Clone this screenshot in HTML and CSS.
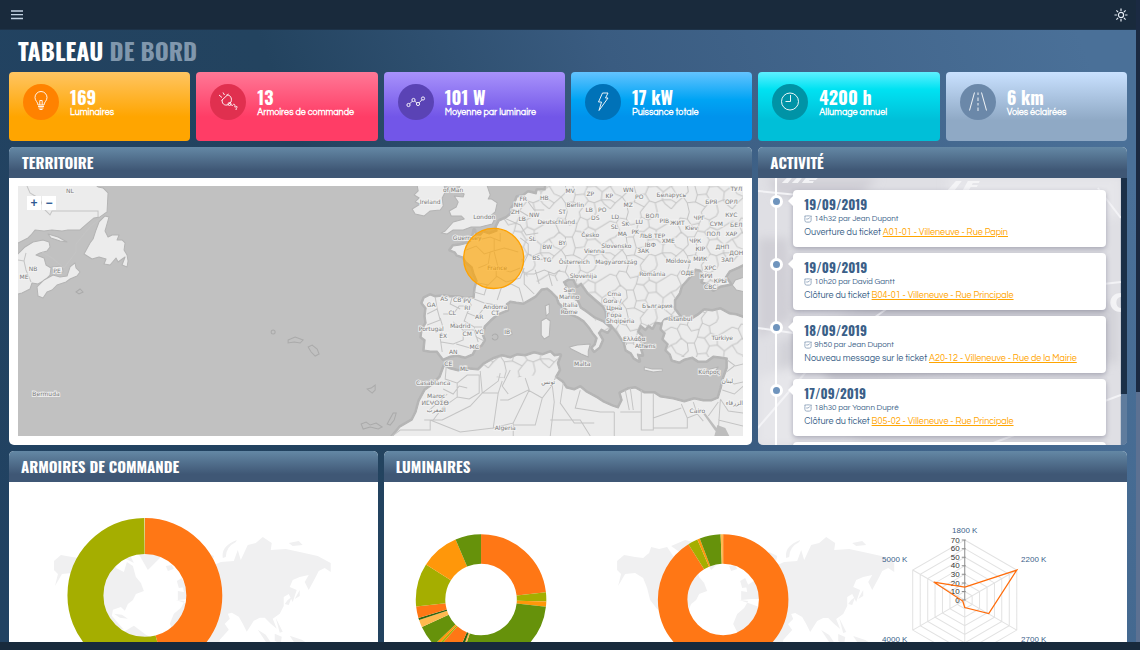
FILE: index.html
```html
<!DOCTYPE html>
<html lang="fr">
<head>
<meta charset="utf-8">
<title>Tableau de bord</title>
<link rel="stylesheet" href="styles.css">
</head>
<body>
<div class="app">
  <div class="view">
    <header class="topbar">
      <button class="icon-btn" type="button" aria-label="Menu"><svg width="12" height="10" viewBox="0 0 12 10"><path d="M0 1h12M0 4.700h12M0 8.500h12" stroke="#c3d2e2" stroke-width="1.300"/></svg></button>
      <button class="icon-btn" type="button" aria-label="Luminosité"><svg width="14" height="14" viewBox="0 0 14 14" fill="none" stroke="#e6edf5" stroke-width="1.200"><circle cx="7" cy="7" r="2.600"/><path d="M7 .5v2.400M7 11.100v2.400M.5 7h2.400M11.100 7h2.400M2.400 2.400l1.700 1.700M9.900 9.900l1.700 1.700M2.400 11.600l1.700-1.700M9.900 4.100l1.700-1.700"/></svg></button>
    </header>
    <main class="main">
      <h1 class="title">TABLEAU <span class="title-soft">DE BORD</span></h1>
      <div class="grid">
        <section class="stat stat-orange">
          <span class="stat-icon"><svg viewBox="0 0 36 36"><path d="M15 21c0-3-3-4-3-7.500a6 6 0 0 1 12 0c0 3.500-3 4.500-3 7.500zM15 22.500h6M15.500 24h5M16.500 25.500h3M16.800 21v-4.500h2.400v4.500"/></svg></span>
          <div><strong class="stat-value">169</strong><span class="stat-label">Luminaires</span></div>
        </section>
        <section class="stat stat-pink">
          <span class="stat-icon"><svg viewBox="0 0 36 36"><path d="M11.500 16.500l7-6.500M12.500 15.500c-1.500 3.500 2 7 6 5l2.500-2.500c1.500-4-1-7.500-4.500-7M12 13.500l-3-2.500M14.500 11l-1.500-2.500M20.500 20.500l2 1c1-2 2.500-1.500 2.500.5-1 2.500 1.500 0 2 .5.500 1-1 1.500-1 3.500"/><circle cx="19.500" cy="20" r="1.500"/></svg></span>
          <div><strong class="stat-value">13</strong><span class="stat-label">Armoires de commande</span></div>
        </section>
        <section class="stat stat-violet">
          <span class="stat-icon"><svg viewBox="0 0 36 36"><circle cx="10.500" cy="21" r="1.600"/><circle cx="15.500" cy="16" r="1.600"/><circle cx="20" cy="20" r="1.600"/><circle cx="25" cy="14.500" r="1.600"/><path d="M11.600 19.900l2.800-2.800M16.700 17.100l2.100 1.800M21.100 18.800l2.900-3.100"/></svg></span>
          <div><strong class="stat-value">101 W</strong><span class="stat-label">Moyenne par luminaire</span></div>
        </section>
        <section class="stat stat-blue">
          <span class="stat-icon"><svg viewBox="0 0 36 36"><path d="M17.500 9h5.500l-2.500 5h2.500l-9 12.500 2.500-8.500h-3z"/></svg></span>
          <div><strong class="stat-value">17 kW</strong><span class="stat-label">Puissance totale</span></div>
        </section>
        <section class="stat stat-cyan">
          <span class="stat-icon"><svg viewBox="0 0 36 36"><circle cx="18" cy="17.500" r="8.500"/><path d="M18.500 11v6.500h-5"/></svg></span>
          <div><strong class="stat-value">4200 h</strong><span class="stat-label">Allumage annuel</span></div>
        </section>
        <section class="stat stat-gray">
          <span class="stat-icon"><svg viewBox="0 0 36 36"><path d="M14.500 8.500L9.500 26.500M21.500 8.500l5 18M18 8.500v2.500M18 13.500v3.500M18 19v2.500M18 23.500v3.500"/></svg></span>
          <div><strong class="stat-value">6 km</strong><span class="stat-label">Voies éclairées</span></div>
        </section>

        <section class="panel wide">
          <h2 class="panel-title">TERRITOIRE</h2>
          <div class="map-wrap">
            <div class="map">
              <svg class="map-svg" viewBox="18 186 725 250" preserveAspectRatio="xMidYMid slice">
                <defs>
                  <path id="europe" d="M547 180L545 190 537 190 536 194 528 192 523 196 517 197 514 205 511 209 512 213 506 218 499 221 496 227 497 231 489 234 483 232 480 236 475 235 474 230 472 240 468 243 460 245 453 246 450 250 455 252 457 255 463 257 466 262 472 267 474 274 477 281 475 288 474 298 465 299 458 297 450 297 443 296 435 297 430 295 424 298 422 303 426 308 425 316 426 323 422 330 421 337 425 340 424 350 430 351 437 351 440 355 443 359 450 356 457 355 465 357 472 354 475 348 481 345 484 340 482 335 484 326 490 320 497 314 507 310 506 304 510 301 516 302 523 303 530 299 535 296 541 289 547 288 552 292 557 297 559 303 566 309 571 314 578 317 584 321 589 327 593 333 597 338 595 345 592 348 594 351 599 347 602 340 598 333 601 329 607 332 610 328 603 322 594 318 586 312 580 308 577 301 570 297 567 289 563 282 568 279 573 278 577 286 581 283 588 293 596 300 603 306 606 311 607 320 612 326 617 332 621 338 624 342 626 350 631 353 634 358 639 361 637 354 642 355 640 349 645 347 639 341 641 336 637 332 640 325 645 329 648 325 652 328 655 322 661 323 664 319 671 316 680 317 674 309 674 300 679 293 681 286 689 277 695 269 700 270 704 276 702 282 709 284 713 290 720 286 730 284 725 277 729 271 738 267 750 261V180z"/>
                  <path id="south" d="M663 320L670 319 680 321 690 320 698 315 704 310 712 311 720 309 729 314 736 315 750 320V445H385L400 427 412 420 416 412 419 401 425 390 432 385 440 377 444 366 450 369 458 371 467 369 478 370 484 364 493 359 502 356 510 358 517 355 525 356 534 353 542 355 550 352 554 356 560 355 557 363 559 370 555 377 562 382 566 388 574 390 580 387 586 392 597 398 603 402 612 406 618 408 622 400 620 393 628 389 635 388 644 393 654 393 660 397 673 399 684 402 694 399 703 401 711 401 718 398 721 388 723 379 727 368 727 358 721 357 713 356 706 361 698 361 692 357 684 359 679 362 672 360 670 354 666 350 668 344 663 339 665 333 661 329z"/>
                  <clipPath id="europe-clip"><use href="#europe"/></clipPath>
                  <clipPath id="south-clip"><use href="#south"/></clipPath>
                  <pattern id="cells" width="61" height="53" patternUnits="userSpaceOnUse">
                    <path d="M0 9l6 2 3-5 7 1 2-7M16 7l4 6 8-2 3-6-1-5M31 5l7 3 7-4 2-4M38 8l1 7 7 3 7-4 8-5M39 15l-6 5-7-1 2-8M26 19l-3 6-7 0-6-5-4-9M10 20l-5 5-5 2M16 25l1 8-5 5-7-3-5-8M33 20l5 8 8-1 0-9M38 28l-3 7-9 1-3-11M26 36l-2 7-8 1-4-6M46 27l7 6 8-6M53 33l-1 8-7 3-6-2-4-7M39 42l-5 6-10-5M34 48l-4 5M12 38l-7 6-5-3M16 44l2 9M52 41l9 0M45 44l2 9M5 44l-5 6M61 50l-6-5-3-4"/>
                  </pattern>
                </defs>
                <rect x="18" y="186" width="725" height="250" fill="#c1c1c1"/>
                <g class="halo">
                  <use href="#europe"/><use href="#south"/>
                </g>
                <g class="land">
                  <path d="M10 180H90L98 187 103 188 108 193 107 212 100 217 94 218 88 223 80 230 68 230 62 231 52 230 44 231 35 230 31 235 28 238 18 243 10 244z"/>
                  <path d="M10 256L18 254 25 247 33 242 43 240 49 242 50 247 47 251 40 253 36 255 44 258 46 265 51 268 50 275 45 280 38 284 32 283 30 289 22 293 10 296z"/>
                  <path d="M37 287L44 280 53 275 60 277 67 276 70 267 75 263 76 268 80 272 77 276 70 279 66 282 57 285 52 290 47 292 43 298 38 296z"/>
                  <path d="M105 216L109 217 107 224 105 231 108 237 112 235 119 235 117 240 122 240 125 243 124 250 127 255 128 261 127 267 122 265 125 257 118 262 116 258 110 265 104 264 106 259 99 257 92 259 84 254 90 243 93 239 96 230 99 222z"/>
                  <path d="M48 234L58 237 67 242 60 241 51 238zM52 267l10-1 1 6-10 1z"/>
                  <path d="M416 180L418 191 414 195 419 198 415 202 420 204 412 209 415 214 424 216 430 211 440 210 443 206 442 198 445 192 443 180z"/>
                  <path d="M462 180L458 191 464 194 463 197 454 196 458 202 456 207 449 211 451 216 461 216 464 219 453 222 445 231 441 233 447 234 453 230 463 230 471 227 480 227 492 224 494 220 489 217 495 212 497 203 491 199 488 199 490 195 485 180z"/>
                  <use href="#europe"/><use href="#south"/>
                  <path d="M750 275L735 280 732 285 736 290 750 293zM569 347l8-2 13-1-2 7 0 6-7-3-10-5zM541 321l5-3 4 3-1 15-5 3-3-4zM545 306l4-2 0 9-3 3zM644 367l8 2 10 0 0 2-9 1-9-2zM704 373l6-4 8-2-4 5-6 4zM505 333l6-2 1 3-4 2z"/>
                </g>
                <g clip-path="url(#europe-clip)"><path d="M498 186H743V345H612L603 330 560 280 545 286 522 274 520 238 497 226z" fill="url(#cells)"/></g>
                <g clip-path="url(#south-clip)"><path d="M663 310H743V357H663z" fill="url(#cells)"/><path d="M480 345h80v30l-15 3-15-3-20 4-15-2-14 0z" fill="url(#cells)"/></g>
                <g class="borders">
                  <path d="M27 186l3 7 10 6 4 10 6 6 2-4h46v6M26 253l-2 8 2 9 5 12M18 260l6 1M42 252l10 6 12 10 12-16 0-8 14-17 12-10"/>
                  <path d="M474 235l8 4 8-2 10 4 0-8M466 250l10-4 8 8 10-3 0-12M478 268l10-4 2-12 14-4 14 4M494 252l4 16 12 4 10-4M478 283l10 2 8-8 0-10M496 276l10 6 14-4 4-10M474 292l10 3 3-10M474 299l10 4 12 2 10 4M497 300l4-12 10-4 8 4 4 14"/>
                  <path d="M435 297l2 12-10 5M437 309l3 11-13 5M440 318l3 10-3 10 2 14M443 314l10 0 6-8 8 0M452 297l-2 7 10 5M467 297l4 8-4 8 10 4 6-8 6-3M467 313l-3 8 10 6 8 0M453 322l10 8 0 10-10 4-12-2M464 330l10 0 4 12M456 344l14 4M474 327l2 10 8 4"/>
                  <path d="M520 238l8 6 0 10 10 6 10-2M528 254l-6 12 2 8 10 0 10-4 10 4 6-4M524 274l0 10 10 10M535 270l4 14M548 272l4 14M528 202l6 8 10 0M518 210l10 6M506 219l14 6 6 10 12-2"/>
                  <path d="M446 367l-1 12 12 4 0 14-14 10-10 13M457 383l10-8 12 0 0 18-10 6-12-2M443 389l10 5 6-8 8 2M480 371l2 22-12 13-28 14-18 0M427 412l20-18M482 393l16-12 2-8M482 393l16 0 4-12M498 393l-5 35 20-5 0 13M500 400h8l20-10 14 8 10-13 4-9M510 370l-8 16 6 8M525 378l4 12-16 33M542 398l-7 27-22 0M552 385l2 17-4 34M563 383l-3 20 14 20 20 0M550 420l30 0 10 16M580 390l-5 18 25 4 14 0M614 412v24M620 412h21v-22M630 388l3 22M625 390l4 20M641 395v35h12v-37M653 428h34v-10l-6-14M653 418l28-10M687 418l10-4 6 7M697 414l-4-12M720 400l-2 30M718 402l-10 14M727 360l8 6 8-2M726 372l8-6M724 380l10 4 9-2M722 390l12 4 9-8M720 399l8 12 15 2M718 420l25 6M392 436l8-6 30 0 0-10M430 420l30 12 33-4"/>
                </g>
                <path d="M704 412l13 17-2 2-12-17zM717 425l8 3 4 8h-15z" fill="#bdbdbd"/>
                <g class="islands"><circle cx="273" cy="332" r="2"/><path d="M288 340l7-3 8 3-3 3-6-1-6 1zM308 347l4-2 5 4 2 5-4 2-4-4zM367 389l4-1 4-3 0 5-3 3zM361 424l5-2 4 3 6-2 6 4-4 2-8-2-7 2zM387 424l6-11 3 0-2 7-4 5zM76 292l4-3 3 3-4 2zM492 336a3 3 0 1 1 0 2"/></g>
                <g class="labels">
                  <text x="70" y="193">NL</text><text x="33" y="271">NB</text><text x="57" y="273">PE</text><text x="24" y="279">ME</text><text x="46" y="396">Bermuda</text>
                  <text x="430" y="204">Ireland</text><text x="453" y="192">of Man</text><text x="484" y="219">London</text><text x="467" y="240">Guernsey</text>
                  <text x="497" y="270">France</text><text x="431" y="307">GA</text><text x="444" y="301">AS</text><text x="457" y="302">CB</text><text x="467" y="303">PV</text><text x="452" y="315">CL</text><text x="467" y="310">RI</text><text x="479" y="319">AR</text><text x="495" y="309">Andorra</text><text x="495" y="315">CT</text><text x="431" y="331">Portugal</text><text x="460" y="328">Madrid</text><text x="443" y="338">EX</text><text x="467" y="336">CM</text><text x="479" y="334">VC</text><text x="474" y="349">MC</text><text x="453" y="354">AN</text><text x="448" y="366">CE</text><text x="464" y="371">ML</text><text x="433" y="385">Casablanca</text><text x="436" y="398">Maroc</text><text x="435" y="405">ⵍⵎⵖⵔⵉⴱ</text><text x="436" y="412">المغرب</text><text x="505" y="430">Algeria</text><text x="548" y="384">تونس</text><text x="507" y="334">IB</text>
                  <text x="544" y="200">HB</text><text x="523" y="201">FR</text><text x="518" y="207">NH</text><text x="515" y="214">ZH</text><text x="522" y="221">LB</text><text x="534" y="217">NW</text><text x="556" y="224">Deutschland</text><text x="562" y="214">ST</text><text x="570" y="193">MV</text><text x="575" y="207">Berlin</text><text x="547" y="249">BW</text><text x="562" y="245">BY</text><text x="532" y="241">SL</text><text x="536" y="260">BS</text><text x="547" y="262">TG</text><text x="574" y="264">Österreich</text><text x="583" y="278">Slovenija</text><text x="569" y="292">San</text><text x="569" y="299">Marino</text><text x="570" y="307">Italia</text><text x="569" y="314">Rome</text><text x="582" y="366">Malta</text>
                  <text x="590" y="196">ZP</text><text x="609" y="198">KP</text><text x="628" y="192">WN</text><text x="639" y="199">PO</text><text x="628" y="207">MZ</text><text x="589" y="212">LB</text><text x="602" y="212">PO</text><text x="595" y="220">DS</text><text x="615" y="219">LD</text><text x="625" y="226">SK</text><text x="639" y="224">LU</text><text x="614" y="229">SL</text><text x="652" y="218">ВОЛ</text><text x="664" y="223">РІВ</text><text x="677" y="225">ЖИТ</text><text x="671" y="197">Беларусь</text><text x="711" y="204">БРЯ</text><text x="731" y="204">ОРЛ</text><text x="736" y="191">ТУЛ</text><text x="731" y="217">КУС</text><text x="699" y="220">ЧРГ</text><text x="716" y="226">СУМ</text><text x="736" y="227">БЕЛ</text><text x="691" y="230">Kiev</text><text x="713" y="236">ПОЛ</text><text x="731" y="236">ХАР</text><text x="590" y="237">Česko</text><text x="622" y="236">MA</text><text x="635" y="234">PK</text><text x="652" y="238">ЛЬВ ТЕР</text><text x="668" y="243">ХМЕ</text><text x="616" y="248">Slovensko</text><text x="650" y="247">ІВФ</text><text x="643" y="253">ЗАК</text><text x="695" y="243">ЧРК</text><text x="700" y="251">КІР</text><text x="722" y="249">ДНП</text><text x="736" y="255">ДОН</text><text x="700" y="261">МИК</text><text x="727" y="262">ЗАП</text><text x="594" y="253">Vienna</text><text x="616" y="264">Magyarország</text><text x="678" y="263">Moldova</text><text x="710" y="270">ХРС</text><text x="687" y="275">ОДЕ</text><text x="706" y="278">КРИ</text><text x="720" y="283">КРЫ</text><text x="710" y="289">СВС</text><text x="652" y="276">România</text><text x="614" y="296">Crna</text><text x="612" y="303">Gora /</text><text x="614" y="310">Црна</text><text x="614" y="317">Гора</text><text x="620" y="323">Shqipëria</text><text x="657" y="308">България</text><text x="634" y="341">Ελλάδα</text><text x="645" y="348">Athens</text><text x="680" y="321">Istanbul</text><text x="722" y="340">Türkiye</text><text x="709" y="374">Κύπρος</text><text x="727" y="383">لبنان</text><text x="734" y="405">الزرقاء</text><text x="697" y="413">Cairo</text>
                </g>
                <circle cx="493.500" cy="258.500" r="30" fill="#ffa500" fill-opacity=".65" stroke="#ffa200" stroke-width="1.300"/>
              </svg>
              <div class="zoom"><button type="button" class="zoom-btn" aria-label="Zoom avant">+</button><button type="button" class="zoom-btn" aria-label="Zoom arrière">−</button></div>
            </div>
          </div>
        </section>

        <section class="panel narrow">
          <h2 class="panel-title title-tight">ACTIVITÉ</h2>
          <div class="activity">
            <div class="feed">
              <svg class="feed-bg" viewBox="0 0 363 267" preserveAspectRatio="xMidYMid slice" aria-hidden="true">
                <defs><filter id="soft"><feGaussianBlur stdDeviation="5"/></filter></defs>
                <rect width="363" height="267" fill="#dfdfe4"/>
                <g filter="url(#soft)"><path d="M0 60l30 0 5 80-35 20zM10 0h110l-20 20H20z" fill="#d0cfd6"/><path d="M20 165l90-40 250 0v60l-180 10-160 20z" fill="#d2d2d8"/><path d="M190 0h173v40H190z" fill="#e6e6ea"/><path d="M0 200l60-20 40 87H0z" fill="#e6e6ea"/></g>
                <path d="M0 13l40 4 90 4M0 150l70 10 80 2M0 250l60-70 70-50M340 10l23 30M310 110l53-6M230 267l133-50" stroke="#f3f3f6" stroke-width="2" fill="none"/>
                <g fill="#f5f5f7" opacity=".9"><path d="M24 5l5-5h5l-4 5zM34 5l5-5h5l-4 5zM44 5l4-5h12l-2 2h-6l-1 1h5l-1 2zM190 12l8-9h6l-7 9zM205 12l5-9h12l-1 2h-6l-1 2h6l-1 2h-6l-2 3z"/><path d="M363 115c-14 0-14 19 0 19v-4c-6 0-6-11 0-11z"/></g>
              </svg>
              <ol class="timeline">
                <li class="event"><article class="event-card"><h3 class="event-date">19/09/2019</h3><p class="event-meta"><svg class="clock" viewBox="0 0 9 9"><rect x="1" y="1" width="7" height="7" rx="2"/><path d="M2.500 4.500h2l2-1.500M0 2l1.500-1.500M9 2L7.500.5"/></svg>14h32 par Jean Dupont</p><p class="event-text">Ouverture du ticket <a href="#">A01-01 - Villeneuve - Rue Papin</a></p></article></li>
                <li class="event"><article class="event-card"><h3 class="event-date">19/09/2019</h3><p class="event-meta"><svg class="clock" viewBox="0 0 9 9"><rect x="1" y="1" width="7" height="7" rx="2"/><path d="M2.500 4.500h2l2-1.500M0 2l1.500-1.500M9 2L7.500.5"/></svg>10h20 par David Gantt</p><p class="event-text">Clôture du ticket <a href="#">B04-01 - Villeneuve - Rue Principale</a></p></article></li>
                <li class="event"><article class="event-card"><h3 class="event-date">18/09/2019</h3><p class="event-meta"><svg class="clock" viewBox="0 0 9 9"><rect x="1" y="1" width="7" height="7" rx="2"/><path d="M2.500 4.500h2l2-1.500M0 2l1.500-1.500M9 2L7.500.5"/></svg>9h50 par Jean Dupont</p><p class="event-text">Nouveau message sur le ticket <a href="#">A20-12 - Villeneuve - Rue de la Mairie</a></p></article></li>
                <li class="event"><article class="event-card"><h3 class="event-date">17/09/2019</h3><p class="event-meta"><svg class="clock" viewBox="0 0 9 9"><rect x="1" y="1" width="7" height="7" rx="2"/><path d="M2.500 4.500h2l2-1.500M0 2l1.500-1.500M9 2L7.500.5"/></svg>18h30 par Yoann Dupré</p><p class="event-text">Clôture du ticket <a href="#">B05-02 - Villeneuve - Rue Principale</a></p></article></li>
                <li class="event"><article class="event-card"></article></li>
              </ol>
            </div>
            <div class="feed-track"><div class="feed-thumb"></div></div>
          </div>
        </section>

        <section class="panel narrow">
          <h2 class="panel-title title-tight">ARMOIRES DE COMMANDE</h2>
          <svg class="chart" viewBox="9 482 369 190">
            <defs>
              <g id="world" fill="#f0f0f1">
                <path d="M54 561L61 555 72 557 80 558 86 553 88 547 96 549 104 547 110 556 118 560 116 568 124 572 127 562 133 566 136 577 141 583 144 591 136 594 133 600 128 604 125 611 121 607 113 610 112 616 117 622 124 630 118 628 107 619 100 612 94 609 87 600 84 588 80 578 72 573 62 574 55 586 58 574 54 570z"/>
                <path d="M108 546l14-6 12 3-6 8 6 12-8-4zM114 614l8 1 6 4-8-1zM124 632l10-6 12 9 10 5 0 30h-30zM132 545l20-8 18 3-8 16-14 14-8-14zM166 566l6-1 2 4-6 2z"/>
                <path d="M176 600L185 601 181 608 174 614 170 624 174 632 184 638 192 640 196 672H218L220 640 229 630 222 620 216 607 203 605 196 607 188 604z"/>
                <path d="M178 600L178 591 184 592 183 586 192 580 196 571 190 572 194 562 206 552 214 556 212 566 221 562 234 561 238 550 241 560 248 545 256 543 263 537 272 543 271 550 286 549 300 552 318 556 331 563 331 572 325 568 319 571 316 577 309 590 305 582 309 575 300 577 293 580 290 587 297 590 293 602 289 594 284 597 284 606 280 614 273 619 277 629 271 624 265 618 260 618 254 621 247 632 243 624 239 617 232 613 228 614 230 619 222 627 214 612 208 607 210 602 200 602 196 599 188 599zM177 581l5-3 4 9-7 1z"/>
                <path d="M223 558q-2-12 14-18l-1 2q-10 5-10 15zM289 543l10-2 4 4-10 1zM258 630l8 5 6 9-6-2zM276 618l3 6 4 8-3 1zM275 634l7 3-1 7-6-3zM290 636l12 4 10 6-16-1zM285 604l3-4 4-3-3 8zM300 596l-5 3 5-9z"/>
              </g>
            </defs>
            <use href="#world"/>
            <g class="ring" transform="translate(145 595.500) rotate(-90)" stroke-width="36">
              <circle r="59.500" pathLength="360" stroke="#ff7715" stroke-dasharray="165 195"/>
              <circle r="59.500" pathLength="360" stroke="#a5ae00" stroke-dasharray="194.600 165.400" stroke-dashoffset="-165"/>
            </g>
          </svg>
        </section>

        <section class="panel wide">
          <h2 class="panel-title title-tight">LUMINAIRES</h2>
          <svg class="chart" viewBox="384 482 743 190">
            <use href="#world" x="563"/>
            <g class="ring" transform="translate(481 599.500) rotate(-90)" stroke-width="29.500">
              <circle r="50.500" pathLength="360" stroke="#ff7715" stroke-dasharray="83.600 360"/>
              <circle r="50.500" pathLength="360" stroke="#a5ae00" stroke-dasharray="8.200 360" stroke-dashoffset="-83.600"/>
              <circle r="50.500" pathLength="360" stroke="#ff970a" stroke-dasharray="4.700 360" stroke-dashoffset="-91.800"/>
              <circle r="50.500" pathLength="360" stroke="#66920b" stroke-dasharray="102 360" stroke-dashoffset="-96.500"/>
              <circle r="50.500" pathLength="360" stroke="#ffb94f" stroke-dasharray="2 360" stroke-dashoffset="-198.500"/>
              <circle r="50.500" pathLength="360" stroke="#2f6410" stroke-dasharray="3 360" stroke-dashoffset="-200.500"/>
              <circle r="50.500" pathLength="360" stroke="#ff7715" stroke-dasharray="18 360" stroke-dashoffset="-203.500"/>
              <circle r="50.500" pathLength="360" stroke="#a5ae00" stroke-dasharray="2 360" stroke-dashoffset="-221.500"/>
              <circle r="50.500" pathLength="360" stroke="#ff970a" stroke-dasharray="2.500 360" stroke-dashoffset="-223.500"/>
              <circle r="50.500" pathLength="360" stroke="#66920b" stroke-dasharray="19 360" stroke-dashoffset="-226"/>
              <circle r="50.500" pathLength="360" stroke="#ffb94f" stroke-dasharray="6.600 360" stroke-dashoffset="-245"/>
              <circle r="50.500" pathLength="360" stroke="#2f6410" stroke-dasharray="2 360" stroke-dashoffset="-251.600"/>
              <circle r="50.500" pathLength="360" stroke="#ff7715" stroke-dasharray="10.300 360" stroke-dashoffset="-253.600"/>
              <circle r="50.500" pathLength="360" stroke="#a5ae00" stroke-dasharray="38.600 360" stroke-dashoffset="-263.900"/>
              <circle r="50.500" pathLength="360" stroke="#ff970a" stroke-dasharray="34.500 360" stroke-dashoffset="-302.500"/>
              <circle r="50.500" pathLength="360" stroke="#66920b" stroke-dasharray="23 360" stroke-dashoffset="-337"/>
            </g>
            <g class="ring" transform="translate(723 599.500) rotate(-90)" stroke-width="29.500">
              <circle r="50.500" pathLength="360" stroke="#ff7715" stroke-dasharray="327.800 360"/>
              <circle r="50.500" pathLength="360" stroke="#a5ae00" stroke-dasharray="8.900 360" stroke-dashoffset="-327.800"/>
              <circle r="50.500" pathLength="360" stroke="#ff970a" stroke-dasharray="2.300 360" stroke-dashoffset="-336.700"/>
              <circle r="50.500" pathLength="360" stroke="#66920b" stroke-dasharray="18.700 360" stroke-dashoffset="-339"/>
              <circle r="50.500" pathLength="360" stroke="#ffb94f" stroke-dasharray="2.300 360" stroke-dashoffset="-357.700"/>
            </g>
            <g transform="translate(964.500 600)" fill="none">
              <path d="M0-60L52-30V30L0 60-52 30V-30zM0-51.400L44.500-25.700V25.700L0 51.400-44.500 25.700V-25.700zM0-42.800L37-21.400V21.400L0 42.800-37 21.400V-21.400zM0-34.300L29.700-17.100V17.100L0 34.300-29.700 17.100V-17.100zM0-25.700L22.300-12.900V12.900L0 25.700-22.300 12.900V-12.900zM0-17.100L14.800-8.600V8.600L0 17.100-14.800 8.600V-8.600zM0-8.600L7.400-4.300V4.300L0 8.600-7.400 4.300V-4.300zM-52-30L52 30M-52 30L52-30M0 0V60" stroke="#e2e2e2"/>
              <path d="M0-60V0M-3-60H1M-3-51.400H1M-3-42.800H1M-3-34.300H1M-3-25.700H1M-3-17.100H1M-3-8.600H1M-3 0H1" stroke="#8c8c8c"/>
              <g class="scale"><text x="-5" y="-57">70</text><text x="-5" y="-49">60</text><text x="-5" y="-40">50</text><text x="-5" y="-32">40</text><text x="-5" y="-23">30</text><text x="-5" y="-14">20</text><text x="-5" y="-6">10</text><text x="-5" y="3">0</text></g>
              <path d="M0-13L52-30 24 13.500 0 7.500-2 1-31-18z" stroke="#ff6c0a" stroke-width="1.300"/>
              <g class="axis"><text x="0" y="-67">1800 K</text><text x="69" y="-38">2200 K</text><text x="69" y="42">2700 K</text><text x="-70" y="42">4000 K</text><text x="-70" y="-38">5000 K</text></g>
            </g>
          </svg>
        </section>
      </div>
    </main>
  </div>
  <div class="track"><div class="thumb"></div></div>
</div>
<footer class="bottom"></footer>
</body>
</html>
```

FILE: styles.css
```css
*, *::before, *::after { box-sizing: border-box; }

body {
  margin: 0;
  height: 100vh;
  display: flex;
  flex-direction: column;
  overflow: hidden;
  font-family: Questrial, Lato, sans-serif;
  color: #3b5f88;
  background: #182a3c;
}

h1, h2, h3, p, ol { margin: 0; padding: 0; }

.app { flex: 1; min-height: 0; display: flex; }

.view {
  flex: 1;
  min-width: 0;
  overflow: hidden;
  background: linear-gradient(70deg, #214262 0%, #23435f 35%, #3a5c81 60%, #4a7098 95%);
}

.topbar {
  height: 30px;
  padding: 0 8px 0 11px;
  display: flex;
  align-items: center;
  justify-content: space-between;
  background: #192a3c;
  border-bottom: 1px solid #1d3248;
}

.icon-btn { display: flex; padding: 0; border: 0; background: none; }

.main { padding: 0 9px; }

.title, .stat-value, .panel-title, .event-date {
  font-family: Oswald, "Liberation Sans Narrow", "Roboto Condensed", sans-serif;
  font-weight: 700;
}

.title {
  padding: 0 0 2px 9px;
  font-size: 24px;
  line-height: 40px;
  color: #fff;
}
.title-soft { color: #8097ad; }

.grid { display: grid; grid-template-columns: repeat(6, 1fr); gap: 6px; }

.stat {
  height: 69px;
  padding: 12px 14px;
  display: flex;
  gap: 11px;
  border-radius: 4px;
  color: #fff;
}
.stat-orange { background: linear-gradient(#ffc562, #ffa500 65%); }
.stat-pink { background: linear-gradient(#ff7896, #ff3d66 65%); }
.stat-violet { background: linear-gradient(#a892fb, #7256e8 65%); }
.stat-blue { background: linear-gradient(#63c3ff, #00a4f4 40%, #0093ec 65%); }
.stat-cyan { background: linear-gradient(#5ef0ff, #00e2f2 25%, #00bfd8 70%); }
.stat-gray { background: linear-gradient(#c9e1ff, #8fa9c5 70%); }

.stat-icon { flex: none; width: 36px; height: 36px; border-radius: 50%; }
.stat-icon svg { display: block; fill: none; stroke: #fff; stroke-opacity: .9; }
.stat-orange .stat-icon { background: #ff8200; }
.stat-pink .stat-icon { background: #e0304f; }
.stat-violet .stat-icon { background: #5a43b5; }
.stat-blue .stat-icon { background: #0072b8; }
.stat-cyan .stat-icon { background: #0093a6; }
.stat-gray .stat-icon { background: #6b88a9; }

.stat-value {
  display: block;
  padding-top: 3px;
  font-size: 18px;
  line-height: 21px;
}
.stat-label {
  display: block;
  font-size: 9px;
  line-height: 10px;
  font-weight: 700;
  white-space: nowrap;
}

.panel { min-width: 0; border-radius: 5px; overflow: hidden; background: #fff; }
.wide { grid-column: span 4; }
.narrow { grid-column: span 2; }

.panel-title {
  padding-left: 13px;
  font-size: 15px;
  line-height: 31px;
  color: #fff;
  background: linear-gradient(#6488a5, #3f5775 75%);
}
.title-tight { padding-left: 12px; }

.map-wrap { padding: 8px 9px 9px; }
.map { position: relative; height: 250px; overflow: hidden; }
.map-svg { display: block; width: 100%; height: 100%; }
.halo { fill: none; stroke: #b0b0b0; stroke-width: 4; opacity: .7; stroke-linejoin: round; }
.land { fill: #ececec; stroke: #b4b4b4; stroke-width: 1; stroke-linejoin: round; }
.borders, #cells path { fill: none; stroke: #c4c4c4; stroke-width: 1; }
.islands { fill: none; stroke: #aaa; }
.labels {
  font: 6px "DejaVu Sans", sans-serif;
  text-anchor: middle;
  fill: #7c7c7c;
  stroke: #f4f4f4;
  stroke-width: 2px;
  stroke-opacity: .8;
  paint-order: stroke;
}
.zoom { position: absolute; top: 10px; left: 9px; display: flex; gap: 1px; }
.zoom-btn {
  width: 14px;
  height: 14px;
  padding: 0;
  border: 0;
  background: #fff;
  color: #2f5a92;
  font: bold 12px/14px "Liberation Sans", sans-serif;
}

.activity { height: 267px; display: flex; background: #3f6288; }
.feed { position: relative; flex: 1; min-width: 0; overflow: hidden; }
.feed-bg { position: absolute; inset: 0; width: 100%; height: 100%; }
.feed-track { width: 6px; background: #5f7c9d; }
.feed-thumb { height: 81%; background: #1b3048; }

.timeline {
  position: relative;
  padding: 12px 15px 0 35px;
  list-style: none;
  display: grid;
  gap: 6px;
}
.timeline::before {
  content: "";
  position: absolute;
  top: 0;
  bottom: 0;
  left: 17px;
  width: 2px;
  background: #fff;
}
.event { position: relative; }
.event::before {
  content: "";
  position: absolute;
  left: -23px;
  top: 5px;
  width: 13px;
  height: 13px;
  border: 3px solid #fff;
  border-radius: 50%;
  background: #6f94bd;
}
.event::after {
  content: "";
  position: absolute;
  left: -5px;
  top: 6px;
  border: 5px solid transparent;
  border-left: 0;
  border-right-color: #fff;
}
.event-card {
  height: 57px;
  padding: 6px 11px;
  border-radius: 4px;
  background: #fff;
  box-shadow: 0 2px 5px rgba(60, 60, 90, .35);
}
.event-date { font-size: 13px; line-height: 16px; }
.event-meta { display: flex; align-items: center; gap: 2px; font-size: 8px; line-height: 13px; }
.event-text { font-size: 9px; line-height: 16px; white-space: nowrap; }
.event-text a { color: #ffa500; }
.clock { width: 8px; height: 8px; fill: none; stroke: #8ea3bb; }

.chart { display: block; width: 100%; }
.ring { fill: none; }
.scale { font: 8px "Liberation Sans", sans-serif; fill: #333; text-anchor: end; }
.axis { font: 8px "Liberation Sans", sans-serif; fill: #3d5f8a; text-anchor: middle; }

.track { width: 4px; background: #5c7192; }
.thumb { height: 61%; background: #1b2a42; }
.bottom { height: 8px; background: #182a3c; }
```
